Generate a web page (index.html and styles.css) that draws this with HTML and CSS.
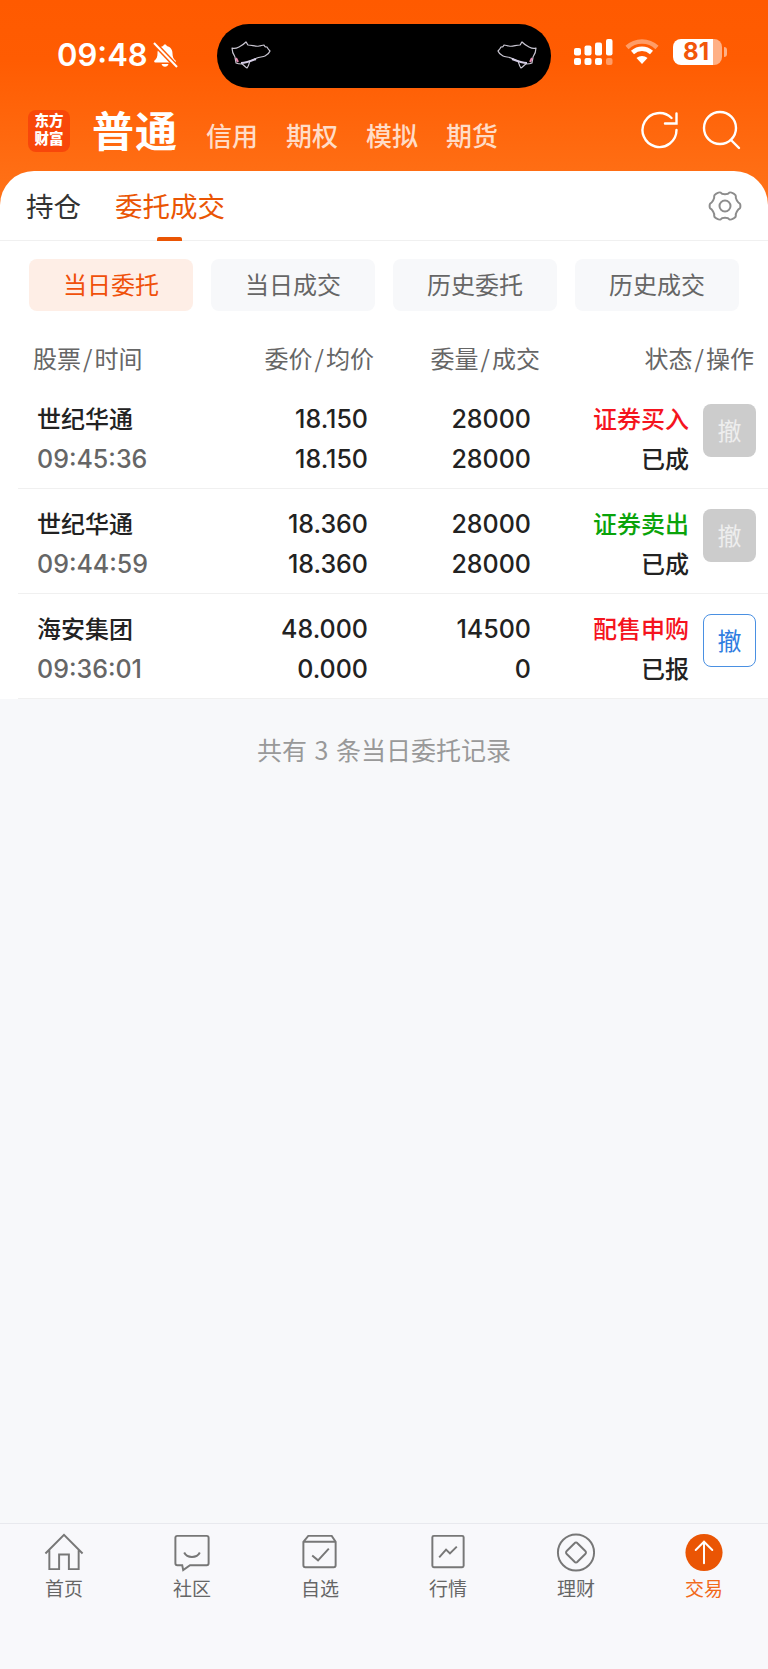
FILE: index.html
```html
<!DOCTYPE html>
<html lang="zh-CN">
<head>
    <meta charset="UTF-8">
    <title>交易-委托成交</title>
    <link rel="stylesheet" href="styles.css">
</head>
<body>
    <div class="page">
        <header class="top">
            <div class="status">
                <div class="clock">
                    <span class="time">09:48</span>
                    <svg class="bell" width="26" height="26" viewBox="0 0 26 26">
                        <path d="M13 2.500c1 0 1.700.7 1.800 1.600 3.800.8 5.700 3.800 5.700 7.400 0 3.500 1 5.300 3 7.100.7.600.3 1.900-.7 1.900H3.200c-1 0-1.400-1.300-.7-1.900 2-1.800 3-3.600 3-7.100 0-3.600 1.900-6.600 5.700-7.400.1-.9.800-1.600 1.800-1.600z" fill="#fff"/>
                        <path d="M9.500 22h7c-.4 1.600-1.800 2.800-3.500 2.800S9.900 23.600 9.500 22z" fill="#fff"/>
                        <path d="M2 1l23 24" stroke="#ff5e06" stroke-width="5"/>
                        <path d="M2 1l23 24" stroke="#fff" stroke-width="2"/>
                    </svg>
                </div>
                <div class="island">
                    <svg class="pig" width="42" height="30" viewBox="0 0 42 30">
                        <path d="M1 7c2 1 5 0 7-1s5-3 7-5c1 1 1 2 2 3 4 0 8 2 11 1 2 0 3-1 5-1 1 2 1 2 3 2 1 2 2 3 3 4-1 3-3 4-5 5s-6 1-8 2-5 2-7 3c-1 2-1 5-3 7-2-1-3-3-5-4-2 0-4 0-6-1 0-2-1-4-1-6-2-3-3-6-3-9z" fill="none" stroke="#c9c6d2" stroke-width="1.200" stroke-linejoin="round"/>
                        <path d="M5 17l2 4" stroke="#e58ab0" stroke-width="2"/>
                        <path d="M10 22c5 0 10-2 15-4" fill="none" stroke="#d6cfe6" stroke-width="2"/>
                    </svg>
                    <svg class="pig pig-flip" width="42" height="30" viewBox="0 0 42 30">
                        <path d="M1 7c2 1 5 0 7-1s5-3 7-5c1 1 1 2 2 3 4 0 8 2 11 1 2 0 3-1 5-1 1 2 1 2 3 2 1 2 2 3 3 4-1 3-3 4-5 5s-6 1-8 2-5 2-7 3c-1 2-1 5-3 7-2-1-3-3-5-4-2 0-4 0-6-1 0-2-1-4-1-6-2-3-3-6-3-9z" fill="none" stroke="#c9c6d2" stroke-width="1.200" stroke-linejoin="round"/>
                        <path d="M5 17l2 4" stroke="#e58ab0" stroke-width="2"/>
                        <path d="M10 22c5 0 10-2 15-4" fill="none" stroke="#d6cfe6" stroke-width="2"/>
                    </svg>
                </div>
                <div class="sys">
                    <svg width="39" height="27" viewBox="0 0 39 27">
                        <g fill="#fff">
                            <rect x="0" y="9" width="7" height="7.500" rx="2"/>
                            <rect x="0" y="19" width="7" height="7" rx="2"/>
                            <rect x="10.500" y="6.500" width="7" height="10" rx="2"/>
                            <rect x="10.500" y="19" width="7" height="7" rx="2"/>
                            <rect x="21" y="3.500" width="7" height="13" rx="2"/>
                            <rect x="21" y="19" width="7" height="7" rx="2"/>
                            <rect x="32" y="0" width="6.500" height="16.500" rx="2"/>
                            <rect x="32" y="19" width="6.500" height="7" rx="2" opacity=".4"/>
                        </g>
                    </svg>
                    <svg class="wifi" width="34" height="26" viewBox="0 0 34 26">
                        <path d="M2 8.500C10.500.5 23.500.5 32 8.500" fill="none" stroke="#fff" stroke-opacity=".4" stroke-width="4.500"/>
                        <path d="M7.500 13.500c5.500-5 13.500-5 19 0" fill="none" stroke="#fff" stroke-width="4.500"/>
                        <path d="M17 25l-5.500-6c3-2.700 8-2.700 11 0z" fill="#fff"/>
                    </svg>
                    <div class="battery">
                        <span class="battery-level">81</span>
                        <i class="battery-nub"></i>
                    </div>
                </div>
            </div>
            <nav class="nav">
                <div class="logo">东方<br>财富</div>
                <a class="nav-main">普通</a>
                <a class="nav-sub">信用</a>
                <a class="nav-sub">期权</a>
                <a class="nav-sub">模拟</a>
                <a class="nav-sub">期货</a>
                <div class="nav-tools">
                    <svg width="40" height="40" viewBox="0 0 40 40">
                        <path d="M35.500 20A17 17 0 1 1 30.500 8M35.500 3.500V13.500H24" fill="none" stroke="#fff" stroke-width="2.400" stroke-linecap="round"/>
                    </svg>
                    <svg width="40" height="40" viewBox="0 0 40 40">
                        <circle cx="19" cy="18" r="16" fill="none" stroke="#fff" stroke-width="2.400"/>
                        <path d="M30 30l8 8" stroke="#fff" stroke-width="2.400" stroke-linecap="round"/>
                    </svg>
                </div>
            </nav>
            <div class="tabs">
                <a class="tab">持仓</a>
                <a class="tab tab-on">委托成交</a>
                <svg class="gear" width="34" height="34" viewBox="0 0 34 34">
                    <path d="M12.500 3.500c1.500 2.400 7.500 2.400 9 0 1-.6 2.400.2 4.500 1.300 1.200.7 1.800 1.300 1.800 2.200-.6 3 2.200 6.700 4 7.600.8.600.8 4.200 0 4.800-1.800.9-4.600 4.600-4 7.600 0 .9-.6 1.500-1.800 2.200-2.100 1.100-3.500 1.900-4.500 1.300-1.500-2.400-7.500-2.400-9 0-1 .6-2.400-.2-4.500-1.300-1.200-.7-1.800-1.300-1.800-2.200.6-3-2.200-6.700-4-7.600-.8-.6-.8-4.200 0-4.800 1.800-.9 4.600-4.600 4-7.600 0-.9.6-1.500 1.800-2.200 2.100-1.100 3.500-1.900 4.500-1.300z" fill="none" stroke="#8c8c8c" stroke-width="2"/>
                    <circle cx="17" cy="17" r="5.500" fill="none" stroke="#8c8c8c" stroke-width="2"/>
                </svg>
            </div>
        </header>

        <main class="main">
            <section class="panel">
                <div class="pills">
                    <a class="pill pill-on">当日委托</a>
                    <a class="pill">当日成交</a>
                    <a class="pill">历史委托</a>
                    <a class="pill">历史成交</a>
                </div>
                <div class="head">
                    <span>股票<i class="sl">/</i>时间</span>
                    <span>委价<i class="sl">/</i>均价</span>
                    <span>委量<i class="sl">/</i>成交</span>
                    <span>状态<i class="sl">/</i>操作</span>
                </div>
                <div class="row">
                    <div class="name">世纪华通</div>
                    <div class="num">18.150</div>
                    <div class="num">28000</div>
                    <div class="state red">证券买入</div>
                    <a class="cancel">撤</a>
                    <div class="clock-cell">09:45:36</div>
                    <div class="num">18.150</div>
                    <div class="num">28000</div>
                    <div class="state">已成</div>
                </div>
                <div class="row">
                    <div class="name">世纪华通</div>
                    <div class="num">18.360</div>
                    <div class="num">28000</div>
                    <div class="state green">证券卖出</div>
                    <a class="cancel">撤</a>
                    <div class="clock-cell">09:44:59</div>
                    <div class="num">18.360</div>
                    <div class="num">28000</div>
                    <div class="state">已成</div>
                </div>
                <div class="row">
                    <div class="name">海安集团</div>
                    <div class="num">48.000</div>
                    <div class="num">14500</div>
                    <div class="state red">配售申购</div>
                    <a class="cancel cancel-on">撤</a>
                    <div class="clock-cell">09:36:01</div>
                    <div class="num">0.000</div>
                    <div class="num">0</div>
                    <div class="state">已报</div>
                </div>
            </section>
            <p class="total">共有 3 条当日委托记录</p>
        </main>

        <footer class="bar">
            <a class="bar-item">
                <svg class="bar-icon" viewBox="0 0 44 44">
                    <path d="M3 23L22 4l19 19M7 19v20h10V24h10v15h10V19"/>
                </svg>
                首页
            </a>
            <a class="bar-item">
                <svg class="bar-icon" viewBox="0 0 44 44">
                    <path d="M7 5h30a2 2 0 0 1 2 2v26a2 2 0 0 1-2 2H20l-7 5-1-5H7a2 2 0 0 1-2-2V7a2 2 0 0 1 2-2zM14 22c3 6 13 6 16 0"/>
                </svg>
                社区
            </a>
            <a class="bar-item">
                <svg class="bar-icon" viewBox="0 0 44 44">
                    <path d="M10 5h24l4 6v24a2 2 0 0 1-2 2H7a2 2 0 0 1-2-2V11zM5 11h33M14 25l6 5 11-12"/>
                </svg>
                自选
            </a>
            <a class="bar-item">
                <svg class="bar-icon" viewBox="0 0 44 44">
                    <rect x="6" y="5" width="32" height="32" rx="1.500"/>
                    <path d="M13 27l7-8 4 4 7-7"/>
                </svg>
                行情
            </a>
            <a class="bar-item">
                <svg class="bar-icon" viewBox="0 0 44 44">
                    <circle cx="22" cy="22" r="18.500"/>
                    <path d="M20.500 12.500a2 2 0 0 1 3 0l8 8a2 2 0 0 1 0 3l-8 8a2 2 0 0 1-3 0l-8-8a2 2 0 0 1 0-3z"/>
                </svg>
                理财
            </a>
            <a class="bar-item bar-on">
                <svg class="bar-icon" viewBox="0 0 44 44">
                    <circle class="bar-disc" cx="22" cy="22" r="19"/>
                    <path class="bar-arrow" d="M22 33V11M13.500 19.500L22 11l8.500 8.500"/>
                </svg>
                交易
            </a>
        </footer>
    </div>
</body>
</html>
```

FILE: styles.css
```css
*{
    margin:0;
    padding:0;
    box-sizing:border-box;
}
body{
    font-family:"Noto Sans CJK SC",sans-serif;
    color:#222;
    background:#f7f8fa;
}
a{
    display:block;
}
i{
    font-style:normal;
}
.page{
    display:flex;
    flex-direction:column;
    width:768px;
    height:1669px;
}

/* header */
.top{
    background:linear-gradient(180deg,#ff5a00 0,#ff5c02 60px,#ff7319 205px);
}
.status{
    display:flex;
    align-items:center;
    height:64px;
    margin-top:24px;
    padding:0 0 0 57px;
}
.clock{
    display:flex;
    align-items:center;
    width:160px;
    color:#fff;
}
.time{
    font-family:Inter,sans-serif;
    font-size:31px;
    font-weight:600;
    line-height:64px;
    margin-top:-2px;
}
.bell{
    margin-left:4px;
    margin-top:-2px;
}
.island{
    display:flex;
    justify-content:space-between;
    align-items:center;
    width:334px;
    height:64px;
    padding:0 14px;
    background:#000;
    border-radius:32px;
}
.pig-flip{
    transform:scaleX(-1);
}
.sys{
    display:flex;
    align-items:center;
    margin-left:23px;
    margin-top:-8px;
}
.wifi{
    margin-left:12px;
}
.battery{
    position:relative;
    width:49px;
    height:26px;
    margin-left:14px;
    border-radius:8px;
    background:linear-gradient(90deg,#fff 0,#fff 82%,#ffb085 82%);
    color:#f2560a;
    font-family:Inter,sans-serif;
    font-size:24px;
    font-weight:700;
    line-height:26px;
    text-align:center;
}
.battery-level{
    display:block;
    margin-left:-3px;
}
.battery-nub{
    position:absolute;
    right:-5px;
    top:8px;
    width:3px;
    height:10px;
    border-radius:0 3px 3px 0;
    background:#ffb085;
}
.nav{
    display:flex;
    align-items:flex-end;
    height:83px;
    padding:0 0 19px 28px;
    color:#fff;
}
.logo{
    width:42px;
    height:42px;
    padding-top:2px;
    border-radius:8px;
    background:#f8470a;
    font-family:Inter,"Noto Sans CJK SC",sans-serif;
    font-size:14.500px;
    font-weight:900;
    line-height:17.500px;
    text-align:center;
}
.nav-main{
    margin-left:22px;
    margin-bottom:-2px;
    font-size:42px;
    font-weight:700;
    line-height:50px;
    letter-spacing:1px;
}
.nav-sub{
    margin-left:28px;
    margin-bottom:1px;
    font-size:26px;
    font-weight:500;
    line-height:32px;
    color:#ffdcc7;
}
.nav-tools{
    display:flex;
    gap:20px;
    margin-left:auto;
    padding-right:27px;
    margin-bottom:2px;
}
.tabs{
    display:flex;
    align-items:center;
    height:70px;
    padding:0 0 0 26px;
    background:#fff;
    border-radius:34px 34px 0 0;
    border-bottom:1px solid #f0f0f0;
    font-size:27.500px;
}
.tab{
    margin-right:34px;
    padding-bottom:2px;
    line-height:40px;
    color:#333;
}
.tab-on{
    position:relative;
    color:#ea5504;
}
.tab-on:after{
    content:"";
    position:absolute;
    left:42px;
    bottom:-14px;
    width:25px;
    height:4px;
    border-radius:2px 2px 0 0;
    background:#ea5504;
}
.gear{
    margin-left:auto;
    margin-right:26px;
}

/* list */
.main{
    flex:1;
}
.panel{
    background:#fff;
}
.pills{
    display:flex;
    gap:18px;
    padding:18px 29px 0;
}
.pill{
    width:164px;
    height:52px;
    border-radius:8px;
    background:#f7f8fa;
    color:#666;
    font-size:24px;
    line-height:50px;
    text-align:center;
}
.pill-on{
    background:#feeee6;
    color:#f0500a;
}
.head{
    display:grid;
    grid-template-columns:190px 151px 166px 214px;
    height:73px;
    padding:23px 0 0 33px;
    color:#666;
    font-size:24px;
    line-height:48px;
    text-align:right;
}
.head span:first-child{
    text-align:left;
}
.sl{
    margin:0 2px;
}
.row{
    display:grid;
    grid-template-columns:203px 128px 163px 158px 53px;
    grid-template-rows:40px 40px;
    align-items:center;
    height:105px;
    margin-left:18px;
    padding:15px 0 0 19px;
    border-bottom:1px solid #f0f0f0;
    font-size:24px;
    font-weight:500;
}
.name{
    padding-bottom:4px;
}
.num{
    font-family:Inter,sans-serif;
    font-size:25px;
    text-align:right;
}
.clock-cell{
    color:#666;
    font-family:Inter,sans-serif;
    font-size:25px;
}
.state{
    padding-bottom:4px;
    text-align:right;
}
.red{
    color:#f5141e;
}
.green{
    color:#0aa30a;
}
.cancel{
    grid-column:5;
    grid-row:1 / span 2;
    align-self:start;
    width:53px;
    height:53px;
    margin-left:14px;
    margin-top:5px;
    border-radius:8px;
    background:#ccc;
    color:#eee;
    font-weight:400;
    line-height:51px;
    text-align:center;
}
.cancel-on{
    background:#fff;
    border:1px solid #4a90e2;
    color:#2f7de1;
    line-height:49px;
}
.total{
    margin-top:30px;
    color:#999;
    font-size:25px;
    line-height:40px;
    text-align:center;
    word-spacing:2px;
}

/* bottom bar */
.bar{
    display:flex;
    height:146px;
    padding-top:7px;
    background:#f8f8fb;
    border-top:1px solid #e8e9ee;
}
.bar-item{
    display:flex;
    flex-direction:column;
    align-items:center;
    width:128px;
    height:70px;
    color:#666;
    font-size:19px;
    line-height:26px;
}
.bar-icon{
    width:44px;
    height:44px;
    margin-bottom:1px;
    fill:none;
    stroke:#777;
    stroke-width:2;
}
.bar-on{
    color:#f26a1b;
}
.bar-disc{
    fill:#ea5504;
    stroke:none;
}
.bar-arrow{
    stroke:#fff;
    stroke-linecap:round;
}
```
